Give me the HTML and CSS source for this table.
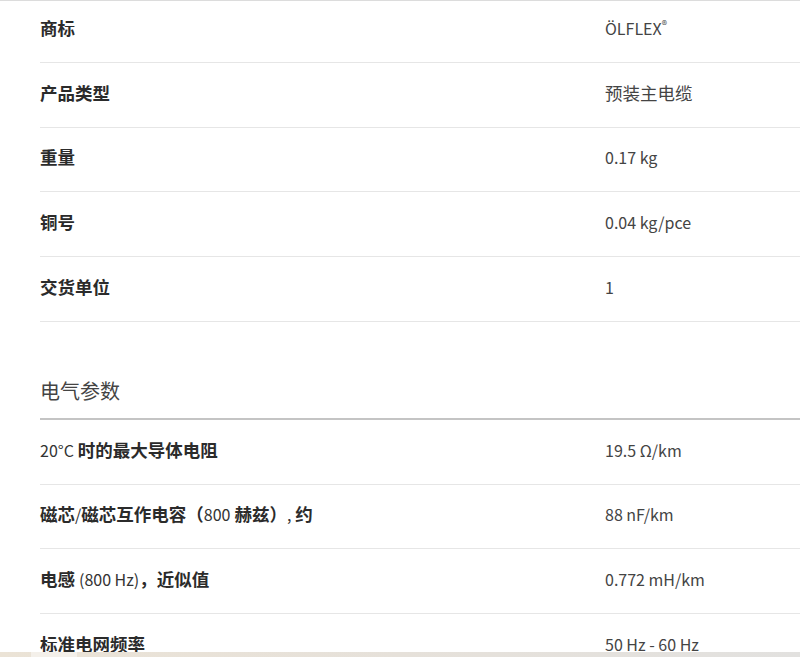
FILE: index.html
```html
<!DOCTYPE html>
<html lang="zh-CN">
<head>
  <meta charset="UTF-8">
  <title>技术参数</title>
  <link rel="stylesheet" href="styles.css">
</head>
<body>
<div class="page">
  <!-- 一般信息 -->
  <div class="section first">
    <div class="row">
      <div class="label">商标</div>
      <div class="value"><span class="en">ÖLFLEX<sup>®</sup></span></div>
    </div>
    <div class="row">
      <div class="label">产品类型</div>
      <div class="value">预装主电缆</div>
    </div>
    <div class="row">
      <div class="label">重量</div>
      <div class="value"><span class="en">0.17 kg</span></div>
    </div>
    <div class="row">
      <div class="label">铜号</div>
      <div class="value"><span class="en">0.04 kg/pce</span></div>
    </div>
    <div class="row">
      <div class="label">交货单位</div>
      <div class="value"><span class="en">1</span></div>
    </div>
  </div>

  <!-- 电气参数 -->
  <div class="section">
    <h2 class="section-title">电气参数</h2>
    <div class="row">
      <div class="label"><span class="en">20°C</span> 时的最大导体电阻</div>
      <div class="value"><span class="en">19.5 Ω/km</span></div>
    </div>
    <div class="row">
      <div class="label">磁芯<span class="en">/</span>磁芯互作电容（<span class="en">800</span> 赫兹）<span class="en">,</span> 约</div>
      <div class="value"><span class="en">88 nF/km</span></div>
    </div>
    <div class="row">
      <div class="label">电感 <span class="en">(800 Hz)</span>，近似值</div>
      <div class="value"><span class="en">0.772 mH/km</span></div>
    </div>
    <div class="row">
      <div class="label">标准电网频率</div>
      <div class="value"><span class="en">50 Hz - 60 Hz</span></div>
    </div>
  </div>
</div>
<div class="footer-bar"><span class="tab"></span></div>
</body>
</html>
```

FILE: styles.css
```css
body {
  margin: 0;
  padding: 0;
  background: #fff;
  font-family: "Noto Sans CJK SC", "Noto Sans", sans-serif;
  color: #333;
  overflow: hidden;
}
.page {
  border-top: 1px solid #dcdcdc;   /* 上一块内容的底线 */
  height: 656px;
  overflow: hidden;
}
.section {
  padding-left: 40px;
}
.section.first {
  margin-top: -3px;    /* 页面已向下滚动了一点 */
}
.section-title {
  margin: 55px 0 0;
  padding-bottom: 13px;
  font-size: 20px;
  line-height: 28px;
  font-weight: normal;
  color: #444;
  border-bottom: 2px solid #c4c4c4;
}
.row {
  display: grid;
  grid-template-columns: 565px 1fr;
  height: 63.75px;
  box-sizing: content-box;
  padding-bottom: 0;
  align-items: center;
  border-bottom: 1px solid #e6e6e6;
  font-size: 17.5px;
  line-height: 24px;
}
.label,
.value {
  margin-bottom: 4px;
}
.label {
  font-weight: bold;
  color: #2b2b2b;
}
.value {
  color: #444;
}
/* 西文部分字号稍小，且不加粗 */
.en {
  font-size: 16px;
  font-weight: normal;
}
.label .en {
  color: #333;
}
.value sup {
  font-size: 11px;
  line-height: 0;
  vertical-align: 6px;
}
.footer-bar {
  position: fixed;
  left: 0;
  right: 0;
  bottom: 0;
  height: 5px;
  background: linear-gradient(to right, #ebe3d6, #e6e1da 50%, #e2e1df);
}
.footer-bar .tab {
  display: block;
  margin-left: 31px;
  width: 46px;
  height: 5px;
  background: #f4f0ea;
}
```
